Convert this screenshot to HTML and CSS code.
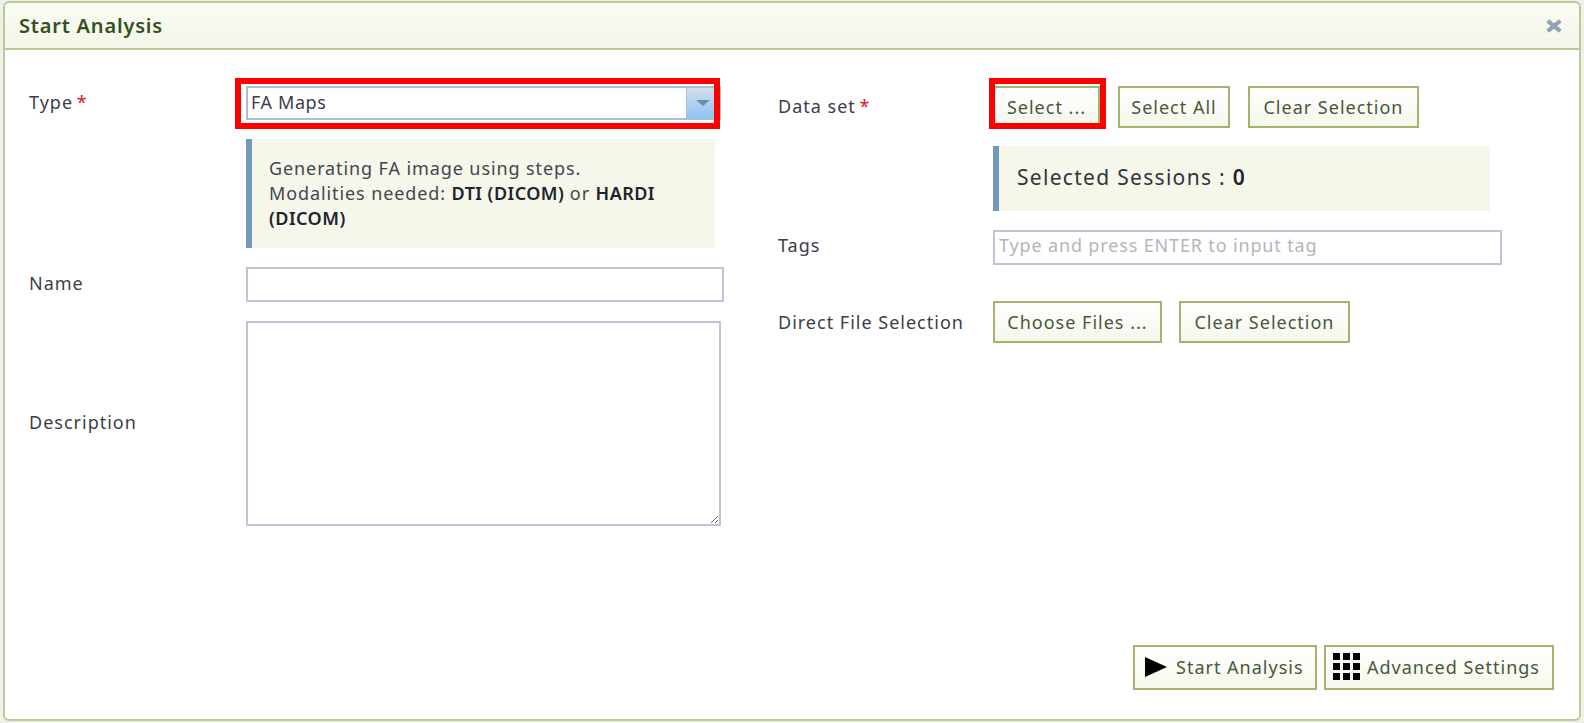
FILE: index.html
```html
<!DOCTYPE html>
<html lang="en">
<head>
<meta charset="utf-8">
<title>Start Analysis</title>
<link rel="stylesheet" href="styles.css">
</head>
<body>
<div class="modal">
  <header class="modal-head">
    <h1 class="modal-title">Start Analysis</h1>
    <svg class="close" viewBox="0 0 14 14" aria-label="Close"><path d="M1.5 2.5 12.5 11.5M12.5 2.5 1.5 11.5"/></svg>
  </header>
  <div class="modal-body">
    <section class="col-left">
      <div class="row row-type">
        <label class="label">Type <span class="req">*</span></label>
        <div class="combo">
          <div class="combo-text">FA Maps</div>
          <div class="combo-btn"><span class="combo-arrow"></span></div>
          <div class="mark mark-combo"></div>
        </div>
      </div>
      <div class="note note-left">Generating FA image using steps.<br>Modalities needed: <b>DTI (DICOM)</b> or <b>HARDI (DICOM)</b></div>
      <div class="row row-name">
        <label class="label">Name</label>
        <input class="text-input name-input" type="text">
      </div>
      <div class="row row-desc">
        <label class="label">Description</label>
        <textarea class="desc-input"></textarea>
      </div>
    </section>
    <section class="col-right">
      <div class="row row-data">
        <label class="label label-r">Data set <span class="req">*</span></label>
        <div class="btns">
          <button class="btn btn-select">Select ...<span class="mark mark-select"></span></button>
          <button class="btn btn-all">Select All</button>
          <button class="btn btn-clear">Clear Selection</button>
        </div>
      </div>
      <div class="note note-right">Selected Sessions : <b>0</b></div>
      <div class="row row-tags">
        <label class="label label-r">Tags</label>
        <input class="text-input tags-input" type="text" placeholder="Type and press ENTER to input tag">
      </div>
      <div class="row row-files">
        <label class="label label-r">Direct File Selection</label>
        <div class="btns">
          <button class="btn btn-choose">Choose Files ...</button>
          <button class="btn btn-clear2">Clear Selection</button>
        </div>
      </div>
    </section>
  </div>
  <footer class="modal-foot">
    <button class="btn btn-foot btn-start">
      <svg class="ico-play" viewBox="0 0 22 20"><path d="M0 0 22 10 0 20Z"/></svg>Start Analysis
    </button>
    <button class="btn btn-foot btn-adv">
      <svg class="ico-grid" viewBox="0 0 27 27"><path d="M0 0h7v7H0zM10 0h7v7h-7zM20 0h7v7h-7zM0 10h7v7H0zM10 10h7v7h-7zM20 10h7v7h-7zM0 20h7v7H0zM10 20h7v7h-7zM20 20h7v7h-7z"/></svg>Advanced Settings
    </button>
  </footer>
</div>
</body>
</html>
```
FILE: styles.css
```css
* { box-sizing: border-box; }
html, body { height: 100%; }
body {
  margin: 0;
  padding: 1px 3px 2px 3px;
  background: #eef0ea;
  font-family: "Noto Sans", sans-serif;
  font-size: 18px;
  letter-spacing: 1px;
  color: #3d3d4a;
}
.modal {
  height: 100%;
  display: flex;
  flex-direction: column;
  background: #fff;
  border: 2px solid #b9cb94;
  border-radius: 6px;
}
.modal-head {
  height: 47px;
  flex: none;
  display: flex;
  align-items: center;
  justify-content: space-between;
  padding: 0 17px 0 14px;
  background: linear-gradient(#fbfcf5, #f3f6e8);
  border-bottom: 2px solid #b9cb94;
  border-radius: 5px 5px 0 0;
}
.modal-title { margin: 0; font-size: 20px; font-weight: 600; letter-spacing: 0.8px; color: #33511f; }
.close { width: 16px; height: 16px; fill: none; stroke: #8ea3b3; stroke-width: 3.6; }
.modal-body { flex: 1; display: flex; min-height: 0; }
.col-left { width: 773px; flex: none; padding: 36px 0 0 24px; }
.col-right { flex: 1; padding: 36px 0 0 0; }
.row { display: flex; }
.label { display: block; flex: none; line-height: 24px; }
.col-left .label { width: 217px; }
.label-r { width: 215px; }
.req { color: #e0141c; margin-left: -2px; }
.row-type { align-items: center; }
.row-type .label { padding-bottom: 2px; }
.combo { position: relative; display: flex; width: 475px; height: 34px; border: 2px solid #a9bfd6; border-radius: 1px; background: #fff; }
.combo-text { flex: 1; padding-left: 3px; line-height: 29px; letter-spacing: 0.6px; border-right: 1px solid #a9bfd6; }
.combo-btn { width: 32px; display: flex; justify-content: center; padding-top: 12px; background: linear-gradient(#d5dfea, #8fc3f5); }
.combo-arrow { width: 0; height: 0; border: 7px solid transparent; border-top: 6px solid #6a8fb5; border-bottom: 0; }
.mark { position: absolute; border: 6px solid #f00; pointer-events: none; }
.mark-combo { left: -13px; top: -10px; width: 485px; height: 51px; }
.note { background: #f4f7e9; border-left: 6px solid #7299bd; }
.note-left { margin: 19px 0 0 217px; width: 469px; height: 109px; padding: 17px 10px 0 17px; line-height: 25px; letter-spacing: 0.9px; color: #454552; }
.note-left b { letter-spacing: 0.45px; }
.note-left b, .note-right b { color: #22222c; font-weight: 600; }
.row-name { margin-top: 19px; }
.row-name .label { padding-top: 4px; }
.text-input { border: 2px solid #bcc4d6; background: #fff; font: inherit; letter-spacing: inherit; color: inherit; padding: 0 4px; outline: 0; border-radius: 0; }
.name-input { width: 478px; height: 35px; }
.row-desc { margin-top: 19px; align-items: center; }
.row-desc .label { padding-bottom: 4px; }
.desc-input { display: block; width: 475px; height: 205px; border: 2px solid #bcc4d6; background: #fff; border-radius: 0; outline: 0; }
.btns { display: flex; }
.btn { position: relative; height: 42px; padding: 0 0 1px; border: 2px solid #a1b56e; background: linear-gradient(#fff, #f5f8ec); font: inherit; letter-spacing: inherit; color: #47583a; border-radius: 0; }
.btn-select { width: 107px; }
.row-data { align-items: flex-start; }
.row-data .label { padding-top: 8px; }
.btn-all { width: 112px; margin-left: 18px; }
.btn-clear { width: 171px; margin-left: 18px; }
.mark-select { left: -6px; top: -10px; width: 117px; height: 51px; }
.note-right { margin: 18px 0 0 215px; width: 497px; height: 65px; padding-left: 18px; line-height: 62px; font-size: 21px; letter-spacing: 1.3px; color: #33333d; }
.row-tags { margin-top: 19px; }
.row-tags .label { padding-top: 3px; }
.tags-input { width: 509px; height: 35px; padding-bottom: 5px; letter-spacing: 0.85px; }
.tags-input::placeholder { color: #b4b4bc; opacity: 1; }
.row-files { margin-top: 36px; }
.row-files .label { padding-top: 9px; }
.btn-choose { width: 169px; }
.btn-clear2 { width: 171px; margin-left: 17px; }
.modal-foot { flex: none; display: flex; justify-content: flex-end; gap: 7px; padding: 0 25px 29px 0; }
.btn-foot { height: 45px; display: flex; align-items: center; padding-bottom: 2px; }
.btn-start { width: 184px; padding-left: 10px; }
.btn-adv { width: 230px; padding-left: 7px; }
.ico-play { width: 22px; height: 20px; margin-right: 9px; fill: #000; flex: none; }
.ico-grid { width: 27px; height: 27px; margin-right: 7px; fill: #000; flex: none; }
```
